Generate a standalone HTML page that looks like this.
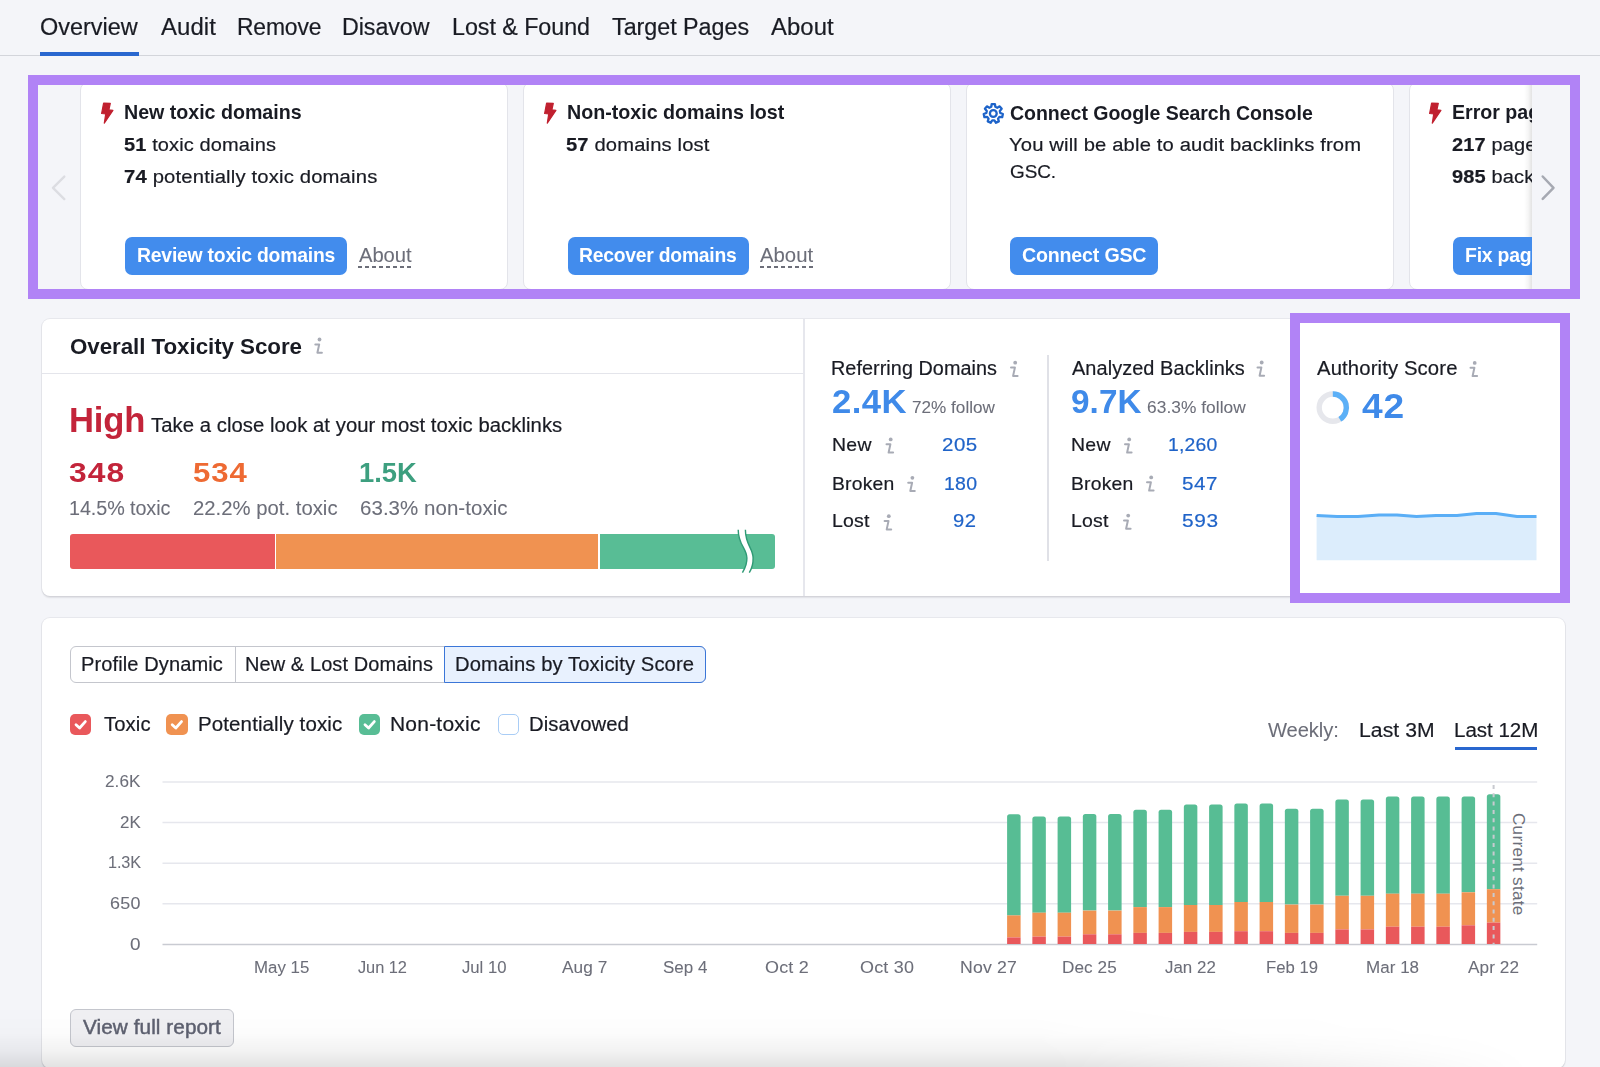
<!DOCTYPE html>
<html><head><meta charset="utf-8">
<style>
html,body{margin:0;padding:0}
body{width:1600px;height:1067px;overflow:hidden;position:relative;background:#f4f5f9;font-family:"Liberation Sans",sans-serif;color:#191b23}
.a{position:absolute}
.t{position:absolute;white-space:nowrap;font-family:"Liberation Sans",sans-serif}
.card{position:absolute;background:#fff;border:1px solid #e3e4ea;border-radius:8px;box-sizing:border-box}
.btn{position:absolute;background:#428ced;border-radius:7px}
.dash{position:absolute;height:1.6px;background-image:linear-gradient(to right,#6c6e79 0,#6c6e79 3.7px,transparent 3.7px);background-size:7px 1.6px}
.purple{position:absolute;border:10px solid #b183f6;box-sizing:border-box}
.scard{position:absolute;background:#fff;border-radius:8px;box-shadow:0 0 0 1px rgba(25,27,35,0.055),0 1.5px 1.5px rgba(25,27,35,0.09)}
.cb{position:absolute;width:21.5px;height:21.5px;border-radius:5px;box-sizing:border-box}
</style></head><body>
<!-- tab bar -->
<div class="a" style="left:0;top:55px;width:1600px;height:1px;background:#d3d5db"></div>
<div class="a" style="left:40px;top:52px;width:99px;height:4px;background:#2967cf"></div>

<!-- notification cards -->
<div class="card" style="left:80px;top:82px;width:427.5px;height:208px"></div>
<div class="card" style="left:523px;top:82px;width:427.5px;height:208px"></div>
<div class="card" style="left:966px;top:82px;width:427.5px;height:208px"></div>
<div class="card" style="left:1409px;top:82px;width:427.5px;height:208px"></div>
<div class="a" style="left:1524px;top:85px;width:8px;height:204px;background:linear-gradient(to right,rgba(0,0,0,0),rgba(0,0,0,0.035) 50%,rgba(0,0,0,0.11))"></div>
<div class="btn" style="left:124.5px;top:236.5px;width:222.5px;height:38px"></div>
<div class="btn" style="left:567.5px;top:236.5px;width:181px;height:38px"></div>
<div class="btn" style="left:1010px;top:236.5px;width:148px;height:38px"></div>
<div class="btn" style="left:1452.5px;top:236.5px;width:148px;height:38px"></div>
<div class="dash" style="left:358.1px;top:266.2px;width:54px"></div>
<div class="dash" style="left:760px;top:266.2px;width:54px"></div>
<svg class="a" style="left:0;top:0" width="1600" height="300">
  <g fill="#c0202f" stroke="#c0202f" stroke-width="1.2" stroke-linejoin="round">
    <path id="bolt" d="M103.6 103.2 L110.3 103.3 L108.9 109.8 L112.9 110.4 L104.3 123.2 L105.7 114 L101.6 113.5 Z"/>
    <path d="M546.6 103.2 L553.3 103.3 L551.9 109.8 L555.9 110.4 L547.3 123.2 L548.7 114 L544.6 113.5 Z"/>
    <path d="M1431.6 103.2 L1438.3 103.3 L1436.9 109.8 L1440.9 110.4 L1432.3 123.2 L1433.7 114 L1429.6 113.5 Z"/>
  </g>
  <g fill="none" stroke="#1d63c9" stroke-width="2.3" stroke-linejoin="round">
    <path d="M991.25 106.81 L991.72 104.03 L994.88 104.03 L995.35 106.81 L997.26 107.73 L999.71 106.36 L1001.69 108.84 L999.81 110.93 L1000.28 112.99 L1002.88 114.06 L1002.18 117.15 L999.37 116.98 L998.05 118.64 L998.84 121.34 L995.98 122.72 L994.36 120.42 L992.24 120.42 L990.62 122.72 L987.76 121.34 L988.55 118.64 L987.23 116.98 L984.42 117.15 L983.72 114.06 L986.32 112.99 L986.79 110.93 L984.91 108.84 L986.89 106.36 L989.34 107.73 Z"/>
    <circle cx="993.3" cy="113.5" r="3.4"/>
  </g>
</svg>

<!-- section 2 -->
<div class="scard" style="left:42px;top:319px;width:1523px;height:277px"></div>
<div class="a" style="left:42px;top:373px;width:762px;height:1px;background:#e4e5eb"></div>
<div class="a" style="left:803px;top:319px;width:2px;height:277px;background:#e6e7ed"></div>
<div class="a" style="left:1047px;top:355px;width:2px;height:206px;background:#e0e1e7"></div>
<!-- toxicity bar -->
<div class="a" style="left:70px;top:534px;width:204.7px;height:34.5px;background:#e9585b;border-radius:3px 0 0 3px"></div>
<div class="a" style="left:275.7px;top:534px;width:322px;height:34.5px;background:#f09251"></div>
<div class="a" style="left:600.2px;top:534px;width:174.8px;height:34.5px;background:#58bd95;border-radius:0 3px 3px 0"></div>
<svg class="a" style="left:0;top:0" width="1600" height="1067">
  <path d="M738.2 529.7 C738.2 545 746.6 548 746.9 558 C747.1 565 744.5 569 742.4 572.7 L749.3 572.7 C751.5 569 753.3 565 753.1 558 C753 548 745.4 545 745.4 529.7 Z" fill="#fff"/>
  <path d="M738.2 529.7 C738.2 545 746.6 548 746.9 558 C747.1 565 744.5 569 742.4 572.7" fill="none" stroke="#2f9a75" stroke-width="1.4"/>
  <path d="M745.4 529.7 C745.4 545 753 548 753.1 558 C753.3 565 751.5 569 749.3 572.7" fill="none" stroke="#2f9a75" stroke-width="1.4"/>
  <!-- info icons -->
  <defs>
    <g id="info">
      <circle cx="5.2" cy="2.2" r="1.9" fill="#a8abb5"/>
      <path d="M1 7.1 H4.9 L3.1 15.4 H7.6" fill="none" stroke="#a8abb5" stroke-width="2" stroke-linecap="round" stroke-linejoin="round"/>
    </g>
  </defs>
  <use href="#info" x="314.3" y="337.3"/>
  <use href="#info" x="1010" y="360.5"/>
  <use href="#info" x="885.5" y="437.2"/>
  <use href="#info" x="907.2" y="475.6"/>
  <use href="#info" x="883.6" y="514"/>
  <use href="#info" x="1256.5" y="360.3"/>
  <use href="#info" x="1124" y="437.2"/>
  <use href="#info" x="1146" y="475.2"/>
  <use href="#info" x="1123" y="513.4"/>
  <use href="#info" x="1469.5" y="360.7"/>
  <!-- donut -->
  <circle cx="1332.8" cy="407.6" r="13.6" fill="none" stroke="#e6e7ec" stroke-width="5.4"/>
  <path d="M1332.80 394.00 A13.6 13.6 0 0 1 1339.80 419.26" fill="none" stroke="#5cb0f7" stroke-width="5.4"/>
  <!-- sparkline -->
  <path d="M1316.6 515.4 L1337 516.6 L1358 516.6 L1379 515 L1397 515 L1416.5 516.6 L1436 515.4 L1457 515.4 L1476.5 513.6 L1496 513.6 L1517 516.6 L1536.5 516.6 L1536.5 560.3 L1316.6 560.3 Z" fill="#dcedfc"/>
  <path d="M1316.6 515.4 L1337 516.6 L1358 516.6 L1379 515 L1397 515 L1416.5 516.6 L1436 515.4 L1457 515.4 L1476.5 513.6 L1496 513.6 L1517 516.6 L1536.5 516.6" fill="none" stroke="#5aaef6" stroke-width="3" stroke-linejoin="round"/>
</svg>

<!-- section 3 -->
<div class="scard" style="left:42px;top:617.5px;width:1523px;height:450px"></div>
<div class="a" style="left:70px;top:646px;width:636.4px;height:37px;border:1px solid #c4c6cd;border-radius:6px;box-sizing:border-box"></div>
<div class="a" style="left:234.5px;top:646px;width:1px;height:37px;background:#c4c6cd"></div>
<div class="a" style="left:444px;top:646px;width:262.4px;height:37px;border:1px solid #3b76d8;border-radius:0 6px 6px 0;background:#e8f1fe;box-sizing:border-box"></div>
<div class="cb" style="left:69.8px;top:713.7px;background:#e9585b"></div>
<div class="cb" style="left:166px;top:713.7px;background:#f09251"></div>
<div class="cb" style="left:358.8px;top:713.7px;background:#58bd95"></div>
<div class="cb" style="left:497.5px;top:713.7px;background:#fff;border:1.5px solid #a9cdf6"></div>
<svg class="a" style="left:0;top:0" width="1600" height="1067">
  <g fill="none" stroke="#fff" stroke-width="2.8" stroke-linecap="round" stroke-linejoin="round">
    <path d="M76.0 724.7 L79.6 728 L85.3 721.6"/>
    <path d="M172.2 724.7 L175.8 728 L181.5 721.6"/>
    <path d="M365.0 724.7 L368.6 728 L374.3 721.6"/>
  </g>
  <g stroke="#e6e7ed" stroke-width="1.5">
    <line x1="162.5" x2="1537.2" y1="782" y2="782"/>
    <line x1="162.5" x2="1537.2" y1="822.6" y2="822.6"/>
    <line x1="162.5" x2="1537.2" y1="863.2" y2="863.2"/>
    <line x1="162.5" x2="1537.2" y1="903.8" y2="903.8"/>
  </g>
  <line x1="162.5" x2="1537.2" y1="944.4" y2="944.4" stroke="#c9cbd2" stroke-width="1.5"/>
  <g><path d="M1007.10 915.40 V816.80 Q1007.10 814.30 1009.60 814.30 H1018.10 Q1020.60 814.30 1020.60 816.80 V915.40 Z" fill="#57bd94"/>
<rect x="1007.10" y="915.40" width="13.5" height="22.00" fill="#f09251"/>
<rect x="1007.10" y="937.40" width="13.5" height="6.60" fill="#e9585b"/>
<path d="M1032.35 912.70 V818.90 Q1032.35 816.40 1034.85 816.40 H1043.35 Q1045.85 816.40 1045.85 818.90 V912.70 Z" fill="#57bd94"/>
<rect x="1032.35" y="912.70" width="13.5" height="23.90" fill="#f09251"/>
<rect x="1032.35" y="936.60" width="13.5" height="7.40" fill="#e9585b"/>
<path d="M1057.60 912.70 V818.90 Q1057.60 816.40 1060.10 816.40 H1068.60 Q1071.10 816.40 1071.10 818.90 V912.70 Z" fill="#57bd94"/>
<rect x="1057.60" y="912.70" width="13.5" height="23.90" fill="#f09251"/>
<rect x="1057.60" y="936.60" width="13.5" height="7.40" fill="#e9585b"/>
<path d="M1082.85 910.60 V816.40 Q1082.85 813.90 1085.35 813.90 H1093.85 Q1096.35 813.90 1096.35 816.40 V910.60 Z" fill="#57bd94"/>
<rect x="1082.85" y="910.60" width="13.5" height="23.70" fill="#f09251"/>
<rect x="1082.85" y="934.30" width="13.5" height="9.70" fill="#e9585b"/>
<path d="M1108.10 910.60 V816.40 Q1108.10 813.90 1110.60 813.90 H1119.10 Q1121.60 813.90 1121.60 816.40 V910.60 Z" fill="#57bd94"/>
<rect x="1108.10" y="910.60" width="13.5" height="23.70" fill="#f09251"/>
<rect x="1108.10" y="934.30" width="13.5" height="9.70" fill="#e9585b"/>
<path d="M1133.35 907.10 V812.30 Q1133.35 809.80 1135.85 809.80 H1144.35 Q1146.85 809.80 1146.85 812.30 V907.10 Z" fill="#57bd94"/>
<rect x="1133.35" y="907.10" width="13.5" height="25.80" fill="#f09251"/>
<rect x="1133.35" y="932.90" width="13.5" height="11.10" fill="#e9585b"/>
<path d="M1158.60 907.10 V812.30 Q1158.60 809.80 1161.10 809.80 H1169.60 Q1172.10 809.80 1172.10 812.30 V907.10 Z" fill="#57bd94"/>
<rect x="1158.60" y="907.10" width="13.5" height="25.80" fill="#f09251"/>
<rect x="1158.60" y="932.90" width="13.5" height="11.10" fill="#e9585b"/>
<path d="M1183.85 905.00 V806.90 Q1183.85 804.40 1186.35 804.40 H1194.85 Q1197.35 804.40 1197.35 806.90 V905.00 Z" fill="#57bd94"/>
<rect x="1183.85" y="905.00" width="13.5" height="26.90" fill="#f09251"/>
<rect x="1183.85" y="931.90" width="13.5" height="12.10" fill="#e9585b"/>
<path d="M1209.10 905.00 V806.90 Q1209.10 804.40 1211.60 804.40 H1220.10 Q1222.60 804.40 1222.60 806.90 V905.00 Z" fill="#57bd94"/>
<rect x="1209.10" y="905.00" width="13.5" height="26.90" fill="#f09251"/>
<rect x="1209.10" y="931.90" width="13.5" height="12.10" fill="#e9585b"/>
<path d="M1234.35 902.00 V806.00 Q1234.35 803.50 1236.85 803.50 H1245.35 Q1247.85 803.50 1247.85 806.00 V902.00 Z" fill="#57bd94"/>
<rect x="1234.35" y="902.00" width="13.5" height="29.20" fill="#f09251"/>
<rect x="1234.35" y="931.20" width="13.5" height="12.80" fill="#e9585b"/>
<path d="M1259.60 902.00 V806.10 Q1259.60 803.60 1262.10 803.60 H1270.60 Q1273.10 803.60 1273.10 806.10 V902.00 Z" fill="#57bd94"/>
<rect x="1259.60" y="902.00" width="13.5" height="29.20" fill="#f09251"/>
<rect x="1259.60" y="931.20" width="13.5" height="12.80" fill="#e9585b"/>
<path d="M1284.85 904.60 V811.30 Q1284.85 808.80 1287.35 808.80 H1295.85 Q1298.35 808.80 1298.35 811.30 V904.60 Z" fill="#57bd94"/>
<rect x="1284.85" y="904.60" width="13.5" height="28.30" fill="#f09251"/>
<rect x="1284.85" y="932.90" width="13.5" height="11.10" fill="#e9585b"/>
<path d="M1310.10 904.60 V811.30 Q1310.10 808.80 1312.60 808.80 H1321.10 Q1323.60 808.80 1323.60 811.30 V904.60 Z" fill="#57bd94"/>
<rect x="1310.10" y="904.60" width="13.5" height="28.30" fill="#f09251"/>
<rect x="1310.10" y="932.90" width="13.5" height="11.10" fill="#e9585b"/>
<path d="M1335.35 895.80 V802.00 Q1335.35 799.50 1337.85 799.50 H1346.35 Q1348.85 799.50 1348.85 802.00 V895.80 Z" fill="#57bd94"/>
<rect x="1335.35" y="895.80" width="13.5" height="33.60" fill="#f09251"/>
<rect x="1335.35" y="929.40" width="13.5" height="14.60" fill="#e9585b"/>
<path d="M1360.60 895.80 V802.00 Q1360.60 799.50 1363.10 799.50 H1371.60 Q1374.10 799.50 1374.10 802.00 V895.80 Z" fill="#57bd94"/>
<rect x="1360.60" y="895.80" width="13.5" height="33.60" fill="#f09251"/>
<rect x="1360.60" y="929.40" width="13.5" height="14.60" fill="#e9585b"/>
<path d="M1385.85 893.70 V798.90 Q1385.85 796.40 1388.35 796.40 H1396.85 Q1399.35 796.40 1399.35 798.90 V893.70 Z" fill="#57bd94"/>
<rect x="1385.85" y="893.70" width="13.5" height="33.00" fill="#f09251"/>
<rect x="1385.85" y="926.70" width="13.5" height="17.30" fill="#e9585b"/>
<path d="M1411.10 893.70 V798.90 Q1411.10 796.40 1413.60 796.40 H1422.10 Q1424.60 796.40 1424.60 798.90 V893.70 Z" fill="#57bd94"/>
<rect x="1411.10" y="893.70" width="13.5" height="33.00" fill="#f09251"/>
<rect x="1411.10" y="926.70" width="13.5" height="17.30" fill="#e9585b"/>
<path d="M1436.35 893.70 V798.90 Q1436.35 796.40 1438.85 796.40 H1447.35 Q1449.85 796.40 1449.85 798.90 V893.70 Z" fill="#57bd94"/>
<rect x="1436.35" y="893.70" width="13.5" height="33.00" fill="#f09251"/>
<rect x="1436.35" y="926.70" width="13.5" height="17.30" fill="#e9585b"/>
<path d="M1461.60 892.30 V798.90 Q1461.60 796.40 1464.10 796.40 H1472.60 Q1475.10 796.40 1475.10 798.90 V892.30 Z" fill="#57bd94"/>
<rect x="1461.60" y="892.30" width="13.5" height="33.00" fill="#f09251"/>
<rect x="1461.60" y="925.30" width="13.5" height="18.70" fill="#e9585b"/>
<path d="M1486.85 889.20 V796.80 Q1486.85 794.30 1489.35 794.30 H1497.85 Q1500.35 794.30 1500.35 796.80 V889.20 Z" fill="#57bd94"/>
<rect x="1486.85" y="889.20" width="13.5" height="33.40" fill="#f09251"/>
<rect x="1486.85" y="922.60" width="13.5" height="21.40" fill="#e9585b"/></g>
  <line x1="1493.6" x2="1493.6" y1="785" y2="944" stroke="#c8cad0" stroke-width="2" stroke-dasharray="4 4.3"/>
</svg>
<div class="a" style="left:1455px;top:747px;width:82px;height:3px;background:#2967cf"></div>
<div class="a" style="left:70px;top:1009px;width:164px;height:38px;border:1px solid #c4c6cd;border-radius:6px;background:#f0f0f3;box-sizing:border-box"></div>

<div class='t' style='left:39.60px;top:14px;font-size:23.5px;line-height:26px;font-weight:400;letter-spacing:-0.004px;color:#191b23;-webkit-text-stroke:0.2px #191b23;transform-origin:0 0;transform:scaleX(0.9992);'>Overview</div>
<div class='t' style='left:161.25px;top:14px;font-size:23.5px;line-height:26px;font-weight:400;letter-spacing:0.083px;color:#191b23;-webkit-text-stroke:0.2px #191b23;transform-origin:0 0;transform:scaleX(1.0191);'>Audit</div>
<div class='t' style='left:236.80px;top:14px;font-size:23.5px;line-height:26px;font-weight:400;letter-spacing:-0.154px;color:#191b23;-webkit-text-stroke:0.2px #191b23;transform-origin:0 0;transform:scaleX(0.9735);'>Remove</div>
<div class='t' style='left:342.27px;top:14px;font-size:23.5px;line-height:26px;font-weight:400;letter-spacing:-0.053px;color:#191b23;-webkit-text-stroke:0.2px #191b23;transform-origin:0 0;transform:scaleX(0.9892);'>Disavow</div>
<div class='t' style='left:451.77px;top:14px;font-size:23.5px;line-height:26px;font-weight:400;letter-spacing:-0.040px;color:#191b23;-webkit-text-stroke:0.2px #191b23;transform-origin:0 0;transform:scaleX(0.9903);'>Lost &amp; Found</div>
<div class='t' style='left:611.60px;top:14px;font-size:23.5px;line-height:26px;font-weight:400;letter-spacing:-0.032px;color:#191b23;-webkit-text-stroke:0.2px #191b23;transform-origin:0 0;transform:scaleX(0.9924);'>Target Pages</div>
<div class='t' style='left:771.00px;top:14px;font-size:23.5px;line-height:26px;font-weight:400;letter-spacing:0.074px;color:#191b23;-webkit-text-stroke:0.2px #191b23;transform-origin:0 0;transform:scaleX(1.0148);'>About</div>
<div class='t' style='left:124.31px;top:101px;font-size:19.75px;line-height:22px;font-weight:700;letter-spacing:-0.020px;color:#191b23;transform-origin:0 0;transform:scaleX(0.9945);'>New toxic domains</div>
<div class='t' style='left:124.26px;top:134px;font-size:19.25px;line-height:21px;font-weight:400;letter-spacing:0.119px;color:#191b23;-webkit-text-stroke:0.2px #191b23;transform-origin:0 0;transform:scaleX(1.0388);'><b>51</b> toxic domains</div>
<div class='t' style='left:124.25px;top:166px;font-size:19.25px;line-height:21px;font-weight:400;letter-spacing:0.147px;color:#191b23;-webkit-text-stroke:0.2px #191b23;transform-origin:0 0;transform:scaleX(1.0533);'><b>74</b> potentially toxic domains</div>
<div class='t' style='left:136.86px;top:243px;font-size:20.5px;line-height:23px;font-weight:700;letter-spacing:-0.220px;color:#ffffff;transform-origin:0 0;transform:scaleX(0.9441);'>Review toxic domains</div>
<div class='t' style='left:358.60px;top:243px;font-size:20.5px;line-height:23px;font-weight:400;letter-spacing:-0.063px;color:#6c6e79;-webkit-text-stroke:0.08px #6c6e79;transform-origin:0 0;transform:scaleX(0.9861);'>About</div>
<div class='t' style='left:566.50px;top:101px;font-size:19.75px;line-height:22px;font-weight:700;letter-spacing:-0.012px;color:#191b23;transform-origin:0 0;transform:scaleX(0.9965);'>Non-toxic domains lost</div>
<div class='t' style='left:566.45px;top:134px;font-size:19.25px;line-height:21px;font-weight:400;letter-spacing:0.145px;color:#191b23;-webkit-text-stroke:0.2px #191b23;transform-origin:0 0;transform:scaleX(1.0476);'><b>57</b> domains lost</div>
<div class='t' style='left:579.06px;top:243px;font-size:20.5px;line-height:23px;font-weight:700;letter-spacing:-0.246px;color:#ffffff;transform-origin:0 0;transform:scaleX(0.9423);'>Recover domains</div>
<div class='t' style='left:760.30px;top:243px;font-size:20.5px;line-height:23px;font-weight:400;letter-spacing:-0.031px;color:#6c6e79;-webkit-text-stroke:0.08px #6c6e79;transform-origin:0 0;transform:scaleX(0.9931);'>About</div>
<div class='t' style='left:1009.51px;top:102px;font-size:19.75px;line-height:22px;font-weight:700;letter-spacing:-0.041px;color:#191b23;transform-origin:0 0;transform:scaleX(0.9890);'>Connect Google Search Console</div>
<div class='t' style='left:1009.45px;top:134px;font-size:19.25px;line-height:21px;font-weight:400;letter-spacing:0.134px;color:#191b23;-webkit-text-stroke:0.2px #191b23;transform-origin:0 0;transform:scaleX(1.0503);'>You will be able to audit backlinks from</div>
<div class='t' style='left:1009.52px;top:161px;font-size:19.25px;line-height:21px;font-weight:400;letter-spacing:-0.085px;color:#191b23;-webkit-text-stroke:0.2px #191b23;transform-origin:0 0;transform:scaleX(0.9833);'>GSC.</div>
<div class='t' style='left:1021.54px;top:243px;font-size:20.5px;line-height:23px;font-weight:700;letter-spacing:-0.196px;color:#ffffff;transform-origin:0 0;transform:scaleX(0.9567);'>Connect GSC</div>
<div class='t' style='left:1452.01px;top:101px;font-size:19.75px;line-height:22px;font-weight:700;letter-spacing:-0.020px;color:#191b23;transform-origin:0 0;transform:scaleX(0.9944);'>Error pages</div>
<div class='t' style='left:1451.96px;top:134px;font-size:19.25px;line-height:21px;font-weight:400;letter-spacing:0.119px;color:#191b23;-webkit-text-stroke:0.2px #191b23;transform-origin:0 0;transform:scaleX(1.0402);'><b>217</b> pages with errors</div>
<div class='t' style='left:1451.96px;top:166px;font-size:19.25px;line-height:21px;font-weight:400;letter-spacing:0.119px;color:#191b23;-webkit-text-stroke:0.2px #191b23;transform-origin:0 0;transform:scaleX(1.0402);'><b>985</b> backlinks to them</div>
<div class='t' style='left:1464.55px;top:243px;font-size:20.5px;line-height:23px;font-weight:700;letter-spacing:-0.220px;color:#ffffff;transform-origin:0 0;transform:scaleX(0.9463);'>Fix pages</div>
<div class='t' style='left:69.52px;top:333px;font-size:22.75px;line-height:26px;font-weight:700;letter-spacing:-0.064px;color:#191b23;transform-origin:0 0;transform:scaleX(0.9833);'>Overall Toxicity Score</div>
<div class='t' style='left:68.55px;top:400px;font-size:35.5px;line-height:40px;font-weight:700;letter-spacing:-0.214px;color:#c3243a;transform-origin:0 0;transform:scaleX(0.9750);'>High</div>
<div class='t' style='left:151.25px;top:414px;font-size:20.0px;line-height:22px;font-weight:400;letter-spacing:0.042px;color:#191b23;-webkit-text-stroke:0.2px #191b23;transform-origin:0 0;transform:scaleX(1.0144);'>Take a close look at your most toxic backlinks</div>
<div class='t' style='left:69.14px;top:457px;font-size:27.5px;line-height:31px;font-weight:700;letter-spacing:0.985px;color:#c3243a;transform-origin:0 0;transform:scaleX(1.1551);'>348</div>
<div class='t' style='left:192.62px;top:457px;font-size:27.5px;line-height:31px;font-weight:700;letter-spacing:0.868px;color:#ee6a33;transform-origin:0 0;transform:scaleX(1.1308);'>534</div>
<div class='t' style='left:358.61px;top:457px;font-size:27.5px;line-height:31px;font-weight:700;letter-spacing:-0.029px;color:#3d9f7f;transform-origin:0 0;transform:scaleX(0.9953);'>1.5K</div>
<div class='t' style='left:69.32px;top:497px;font-size:20.25px;line-height:22px;font-weight:400;letter-spacing:-0.085px;color:#6c6e79;-webkit-text-stroke:0.08px #6c6e79;transform-origin:0 0;transform:scaleX(0.9760);'>14.5% toxic</div>
<div class='t' style='left:192.75px;top:497px;font-size:20.25px;line-height:22px;font-weight:400;letter-spacing:0.007px;color:#6c6e79;-webkit-text-stroke:0.08px #6c6e79;transform-origin:0 0;transform:scaleX(1.0024);'>22.2% pot. toxic</div>
<div class='t' style='left:359.59px;top:497px;font-size:20.25px;line-height:22px;font-weight:400;letter-spacing:0.041px;color:#6c6e79;-webkit-text-stroke:0.08px #6c6e79;transform-origin:0 0;transform:scaleX(1.0120);'>63.3% non-toxic</div>
<div class='t' style='left:831.47px;top:357px;font-size:19.5px;line-height:22px;font-weight:400;letter-spacing:0.052px;color:#191b23;-webkit-text-stroke:0.2px #191b23;transform-origin:0 0;transform:scaleX(1.0159);'>Referring Domains</div>
<div class='t' style='left:831.94px;top:383px;font-size:32.75px;line-height:37px;font-weight:700;letter-spacing:0.417px;color:#3f8ae9;transform-origin:0 0;transform:scaleX(1.0585);'>2.4K</div>
<div class='t' style='left:912.19px;top:398px;font-size:17.0px;line-height:19px;font-weight:400;letter-spacing:0.019px;color:#6c6e79;-webkit-text-stroke:0.08px #6c6e79;transform-origin:0 0;transform:scaleX(1.0065);'>72% follow</div>
<div class='t' style='left:832.45px;top:434px;font-size:18.5px;line-height:21px;font-weight:400;letter-spacing:0.286px;color:#191b23;-webkit-text-stroke:0.2px #191b23;transform-origin:0 0;transform:scaleX(1.0500);'>New</div>
<div class='t' style='left:941.59px;top:434px;font-size:18.5px;line-height:21px;font-weight:400;letter-spacing:0.463px;color:#1f63c8;-webkit-text-stroke:0.2px #1f63c8;transform-origin:0 0;transform:scaleX(1.1060);'>205</div>
<div class='t' style='left:832.45px;top:473px;font-size:18.5px;line-height:21px;font-weight:400;letter-spacing:0.167px;color:#191b23;-webkit-text-stroke:0.2px #191b23;transform-origin:0 0;transform:scaleX(1.0461);'>Broken</div>
<div class='t' style='left:943.65px;top:473px;font-size:18.5px;line-height:21px;font-weight:400;letter-spacing:0.249px;color:#1f63c8;-webkit-text-stroke:0.2px #1f63c8;transform-origin:0 0;transform:scaleX(1.0543);'>180</div>
<div class='t' style='left:832.45px;top:510px;font-size:18.5px;line-height:21px;font-weight:400;letter-spacing:0.190px;color:#191b23;-webkit-text-stroke:0.2px #191b23;transform-origin:0 0;transform:scaleX(1.0529);'>Lost</div>
<div class='t' style='left:953.41px;top:510px;font-size:18.5px;line-height:21px;font-weight:400;letter-spacing:0.527px;color:#1f63c8;-webkit-text-stroke:0.2px #1f63c8;transform-origin:0 0;transform:scaleX(1.0908);'>92</div>
<div class='t' style='left:1071.90px;top:357px;font-size:19.5px;line-height:22px;font-weight:400;letter-spacing:0.069px;color:#191b23;-webkit-text-stroke:0.2px #191b23;transform-origin:0 0;transform:scaleX(1.0216);'>Analyzed Backlinks</div>
<div class='t' style='left:1070.88px;top:383px;font-size:32.75px;line-height:37px;font-weight:700;letter-spacing:0.115px;color:#3f8ae9;transform-origin:0 0;transform:scaleX(1.0154);'>9.7K</div>
<div class='t' style='left:1147.38px;top:398px;font-size:17.0px;line-height:19px;font-weight:400;letter-spacing:0.054px;color:#6c6e79;-webkit-text-stroke:0.08px #6c6e79;transform-origin:0 0;transform:scaleX(1.0189);'>63.3% follow</div>
<div class='t' style='left:1070.85px;top:434px;font-size:18.5px;line-height:21px;font-weight:400;letter-spacing:0.286px;color:#191b23;-webkit-text-stroke:0.2px #191b23;transform-origin:0 0;transform:scaleX(1.0500);'>New</div>
<div class='t' style='left:1167.85px;top:434px;font-size:18.5px;line-height:21px;font-weight:400;letter-spacing:0.167px;color:#1f63c8;-webkit-text-stroke:0.2px #1f63c8;transform-origin:0 0;transform:scaleX(1.0467);'>1,260</div>
<div class='t' style='left:1070.85px;top:473px;font-size:18.5px;line-height:21px;font-weight:400;letter-spacing:0.167px;color:#191b23;-webkit-text-stroke:0.2px #191b23;transform-origin:0 0;transform:scaleX(1.0461);'>Broken</div>
<div class='t' style='left:1182.19px;top:473px;font-size:18.5px;line-height:21px;font-weight:400;letter-spacing:0.494px;color:#1f63c8;-webkit-text-stroke:0.2px #1f63c8;transform-origin:0 0;transform:scaleX(1.1138);'>547</div>
<div class='t' style='left:1070.85px;top:510px;font-size:18.5px;line-height:21px;font-weight:400;letter-spacing:0.190px;color:#191b23;-webkit-text-stroke:0.2px #191b23;transform-origin:0 0;transform:scaleX(1.0529);'>Lost</div>
<div class='t' style='left:1181.57px;top:510px;font-size:18.5px;line-height:21px;font-weight:400;letter-spacing:0.553px;color:#1f63c8;-webkit-text-stroke:0.2px #1f63c8;transform-origin:0 0;transform:scaleX(1.1293);'>593</div>
<div class='t' style='left:1316.90px;top:357px;font-size:19.5px;line-height:22px;font-weight:400;letter-spacing:0.122px;color:#191b23;-webkit-text-stroke:0.2px #191b23;transform-origin:0 0;transform:scaleX(1.0400);'>Authority Score</div>
<div class='t' style='left:1361.60px;top:387px;font-size:34.75px;line-height:38px;font-weight:700;letter-spacing:0.773px;color:#3f8ae9;transform-origin:0 0;transform:scaleX(1.0669);'>42</div>
<div class='t' style='left:80.94px;top:653px;font-size:19.5px;line-height:22px;font-weight:400;letter-spacing:0.090px;color:#191b23;-webkit-text-stroke:0.2px #191b23;transform-origin:0 0;transform:scaleX(1.0291);'>Profile Dynamic</div>
<div class='t' style='left:245.45px;top:653px;font-size:19.5px;line-height:22px;font-weight:400;letter-spacing:0.085px;color:#191b23;-webkit-text-stroke:0.2px #191b23;transform-origin:0 0;transform:scaleX(1.0247);'>New &amp; Lost Domains</div>
<div class='t' style='left:455.33px;top:653px;font-size:19.5px;line-height:22px;font-weight:400;letter-spacing:0.107px;color:#191b23;-webkit-text-stroke:0.2px #191b23;transform-origin:0 0;transform:scaleX(1.0352);'>Domains by Toxicity Score</div>
<div class='t' style='left:103.50px;top:713px;font-size:19.75px;line-height:22px;font-weight:400;letter-spacing:0.091px;color:#191b23;-webkit-text-stroke:0.2px #191b23;transform-origin:0 0;transform:scaleX(1.0256);'>Toxic</div>
<div class='t' style='left:197.62px;top:713px;font-size:19.75px;line-height:22px;font-weight:400;letter-spacing:0.104px;color:#191b23;-webkit-text-stroke:0.2px #191b23;transform-origin:0 0;transform:scaleX(1.0383);'>Potentially toxic</div>
<div class='t' style='left:390.37px;top:713px;font-size:19.75px;line-height:22px;font-weight:400;letter-spacing:0.200px;color:#191b23;-webkit-text-stroke:0.2px #191b23;transform-origin:0 0;transform:scaleX(1.0630);'>Non-toxic</div>
<div class='t' style='left:528.65px;top:713px;font-size:19.75px;line-height:22px;font-weight:400;letter-spacing:0.097px;color:#191b23;-webkit-text-stroke:0.2px #191b23;transform-origin:0 0;transform:scaleX(1.0258);'>Disavowed</div>
<div class='t' style='left:1268.00px;top:718px;font-size:20.75px;line-height:23px;font-weight:400;letter-spacing:-0.111px;color:#6c6e79;-webkit-text-stroke:0.08px #6c6e79;transform-origin:0 0;transform:scaleX(0.9729);'>Weekly:</div>
<div class='t' style='left:1358.56px;top:718px;font-size:20.75px;line-height:23px;font-weight:400;letter-spacing:0.074px;color:#191b23;-webkit-text-stroke:0.2px #191b23;transform-origin:0 0;transform:scaleX(1.0193);'>Last 3M</div>
<div class='t' style='left:1454.02px;top:718px;font-size:20.75px;line-height:23px;font-weight:400;letter-spacing:-0.036px;color:#191b23;-webkit-text-stroke:0.2px #191b23;transform-origin:0 0;transform:scaleX(0.9909);'>Last 12M</div>
<div class='t' style='left:83.00px;top:1016px;font-size:20.25px;line-height:22px;font-weight:400;letter-spacing:0.070px;color:#5e6170;-webkit-text-stroke:0.45px #5e6170;transform-origin:0 0;transform:scaleX(1.0241);'>View full report</div>
<div class='t' style='left:105.28px;top:772px;font-size:16.75px;line-height:19px;font-weight:400;letter-spacing:0.081px;color:#6c6e79;-webkit-text-stroke:0.08px #6c6e79;transform-origin:0 0;transform:scaleX(1.0227);'>2.6K</div>
<div class='t' style='left:119.99px;top:813px;font-size:16.75px;line-height:19px;font-weight:400;letter-spacing:0.074px;color:#6c6e79;-webkit-text-stroke:0.08px #6c6e79;transform-origin:0 0;transform:scaleX(1.0118);'>2K</div>
<div class='t' style='left:107.73px;top:853px;font-size:16.75px;line-height:19px;font-weight:400;letter-spacing:-0.121px;color:#6c6e79;-webkit-text-stroke:0.08px #6c6e79;transform-origin:0 0;transform:scaleX(0.9682);'>1.3K</div>
<div class='t' style='left:109.73px;top:894px;font-size:16.75px;line-height:19px;font-weight:400;letter-spacing:0.292px;color:#6c6e79;-webkit-text-stroke:0.08px #6c6e79;transform-origin:0 0;transform:scaleX(1.0694);'>650</div>
<div class='t' style='left:129.77px;top:935px;font-size:16.75px;line-height:19px;font-weight:400;letter-spacing:0.000px;color:#6c6e79;-webkit-text-stroke:0.08px #6c6e79;transform-origin:0 0;transform:scaleX(1.1313);'>0</div>
<div class='t' style='left:253.99px;top:958px;font-size:16.75px;line-height:19px;font-weight:400;letter-spacing:0.020px;color:#6c6e79;-webkit-text-stroke:0.08px #6c6e79;transform-origin:0 0;transform:scaleX(1.0057);'>May 15</div>
<div class='t' style='left:358.40px;top:958px;font-size:16.75px;line-height:19px;font-weight:400;letter-spacing:-0.077px;color:#6c6e79;-webkit-text-stroke:0.08px #6c6e79;transform-origin:0 0;transform:scaleX(0.9775);'>Jun 12</div>
<div class='t' style='left:461.60px;top:958px;font-size:16.75px;line-height:19px;font-weight:400;letter-spacing:-0.010px;color:#6c6e79;-webkit-text-stroke:0.08px #6c6e79;transform-origin:0 0;transform:scaleX(0.9966);'>Jul 10</div>
<div class='t' style='left:562.25px;top:958px;font-size:16.75px;line-height:19px;font-weight:400;letter-spacing:0.100px;color:#6c6e79;-webkit-text-stroke:0.08px #6c6e79;transform-origin:0 0;transform:scaleX(1.0288);'>Aug 7</div>
<div class='t' style='left:662.74px;top:958px;font-size:16.75px;line-height:19px;font-weight:400;letter-spacing:0.046px;color:#6c6e79;-webkit-text-stroke:0.08px #6c6e79;transform-origin:0 0;transform:scaleX(1.0131);'>Sep 4</div>
<div class='t' style='left:764.63px;top:958px;font-size:16.75px;line-height:19px;font-weight:400;letter-spacing:0.207px;color:#6c6e79;-webkit-text-stroke:0.08px #6c6e79;transform-origin:0 0;transform:scaleX(1.0701);'>Oct 2</div>
<div class='t' style='left:860.43px;top:958px;font-size:16.75px;line-height:19px;font-weight:400;letter-spacing:0.210px;color:#6c6e79;-webkit-text-stroke:0.08px #6c6e79;transform-origin:0 0;transform:scaleX(1.0703);'>Oct 30</div>
<div class='t' style='left:960.19px;top:958px;font-size:16.75px;line-height:19px;font-weight:400;letter-spacing:0.178px;color:#6c6e79;-webkit-text-stroke:0.08px #6c6e79;transform-origin:0 0;transform:scaleX(1.0551);'>Nov 27</div>
<div class='t' style='left:1061.58px;top:958px;font-size:16.75px;line-height:19px;font-weight:400;letter-spacing:0.078px;color:#6c6e79;-webkit-text-stroke:0.08px #6c6e79;transform-origin:0 0;transform:scaleX(1.0231);'>Dec 25</div>
<div class='t' style='left:1165.30px;top:958px;font-size:16.75px;line-height:19px;font-weight:400;letter-spacing:0.025px;color:#6c6e79;-webkit-text-stroke:0.08px #6c6e79;transform-origin:0 0;transform:scaleX(1.0075);'>Jan 22</div>
<div class='t' style='left:1265.70px;top:958px;font-size:16.75px;line-height:19px;font-weight:400;letter-spacing:-0.005px;color:#6c6e79;-webkit-text-stroke:0.08px #6c6e79;transform-origin:0 0;transform:scaleX(0.9985);'>Feb 19</div>
<div class='t' style='left:1366.09px;top:958px;font-size:16.75px;line-height:19px;font-weight:400;letter-spacing:0.044px;color:#6c6e79;-webkit-text-stroke:0.08px #6c6e79;transform-origin:0 0;transform:scaleX(1.0135);'>Mar 18</div>
<div class='t' style='left:1468.10px;top:958px;font-size:16.75px;line-height:19px;font-weight:400;letter-spacing:0.078px;color:#6c6e79;-webkit-text-stroke:0.08px #6c6e79;transform-origin:0 0;transform:scaleX(1.0245);'>Apr 22</div>
<div class='t' style='left:1527.25px;top:812.50px;font-size:17.0px;line-height:17.0px;font-weight:400;letter-spacing:0.333px;color:#6c6e79;transform-origin:0 0;transform:rotate(90deg)'>Current state</div>

<!-- clip overlay for card 4 -->
<div class="a" style="left:1532px;top:70px;width:68px;height:235px;background:#f4f5f9"></div>
<svg class="a" style="left:0;top:0" width="1600" height="300">
  <path d="M64.3 176.6 L53 187.8 L64.3 199.1" fill="none" stroke="#dcdde2" stroke-width="2.4" stroke-linecap="round" stroke-linejoin="round"/>
  <path d="M1542.7 176.5 L1553.5 187.8 L1542.7 198.8" fill="none" stroke="#a6a9b2" stroke-width="2.5" stroke-linecap="round" stroke-linejoin="round"/>
</svg>
<div class="purple" style="left:28px;top:75px;width:1552px;height:224px"></div>
<div class="purple" style="left:1290px;top:313px;width:280px;height:290px"></div>
<!-- bottom vignette -->
<div class="a" style="left:0;top:1005px;width:1600px;height:62px;background:linear-gradient(to bottom,rgba(0,0,0,0) 0,rgba(0,0,0,0.012) 45%,rgba(0,0,0,0.05) 75%,rgba(0,0,0,0.11) 100%);-webkit-mask-image:radial-gradient(ellipse 1050px 120px at 480px 100%,#000 55%,transparent 100%)"></div>
</body></html>
